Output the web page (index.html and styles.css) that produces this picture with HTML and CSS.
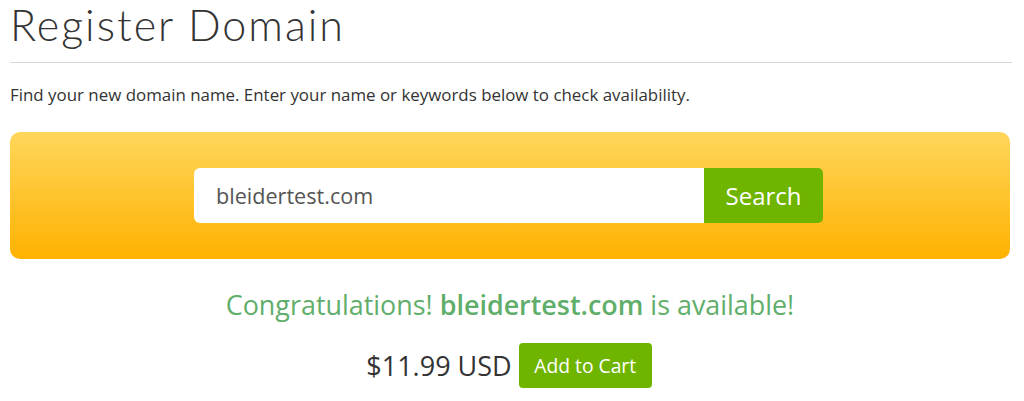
FILE: index.html
```html
<!DOCTYPE html>
<html lang="en">
<head>
<meta charset="utf-8">
<title>Register Domain</title>
<link rel="stylesheet" href="styles.css">
</head>
<body>
<div class="page">
  <h1 class="title">Register Domain</h1>
  <p class="intro">Find your new domain name. Enter your name or keywords below to check availability.</p>
  <div class="search-box">
    <form class="search-form">
      <input class="search-input" type="text" value="bleidertest.com">
      <button class="search-btn" type="button">Search</button>
    </form>
  </div>
  <p class="result">Congratulations! <strong>bleidertest.com</strong> is available!</p>
  <div class="price-row">
    <span class="price">$11.99 USD</span>
    <button class="cart-btn" type="button">Add to Cart</button>
  </div>
</div>
</body>
</html>
```

FILE: styles.css
```css
html, body {
  margin: 0;
  padding: 0;
  background: #ffffff;
}
body {
  font-family: "Open Sans", "Liberation Sans", sans-serif;
  color: #333333;
}
.page {
  width: 1000px;
  margin-left: 10px;
}
.title {
  margin: 0;
  padding: 0 0 12px 0;
  font-family: Lato, "Open Sans", sans-serif;
  font-weight: 300;
  font-size: 43px;
  letter-spacing: 2px;
  line-height: 50px;
  color: #333333;
  border-bottom: 1px solid #d8d8d8;
  width: 1002px;
}
.intro {
  margin: 20px 0 0 0;
  font-size: 16.9px;
  line-height: 24px;
  color: #333333;
}
.search-box {
  margin-top: 25px;
  height: 127px;
  border-radius: 10px;
  background: linear-gradient(to bottom, #ffd65b 0%, #ffc42e 50%, #ffb200 100%);
  display: flex;
  justify-content: center;
  align-items: center;
}
.search-form {
  display: flex;
  margin-left: -3px;
}
.search-input {
  width: 510px;
  height: 55px;
  box-sizing: border-box;
  border: 0;
  border-radius: 6px 0 0 6px;
  padding: 0 0 0 22px;
  font-family: "Open Sans", sans-serif;
  font-size: 21.6px;
  color: #555555;
  background: #ffffff;
  outline: none;
}
.search-btn {
  width: 119px;
  height: 55px;
  border: 0;
  border-radius: 0 5px 5px 0;
  background: #6fb500;
  color: #ffffff;
  font-family: "Open Sans", sans-serif;
  font-size: 24px;
  padding: 0;
}
.result {
  margin: 28px 0 0 0;
  text-align: center;
  font-size: 26.9px;
  line-height: 36px;
  color: #5fae6a;
}
.result strong {
  font-weight: 600;
}
.price-row {
  margin-top: 20px;
  display: flex;
  justify-content: center;
  align-items: center;
  gap: 7px;
  margin-left: -2px;
}
.price {
  font-size: 27px;
  color: #333333;
}
.cart-btn {
  width: 133px;
  height: 45px;
  border: 0;
  border-radius: 4px;
  background: #6fb500;
  color: #ffffff;
  font-family: "Open Sans", sans-serif;
  font-size: 19.3px;
  padding: 0;
}
```
